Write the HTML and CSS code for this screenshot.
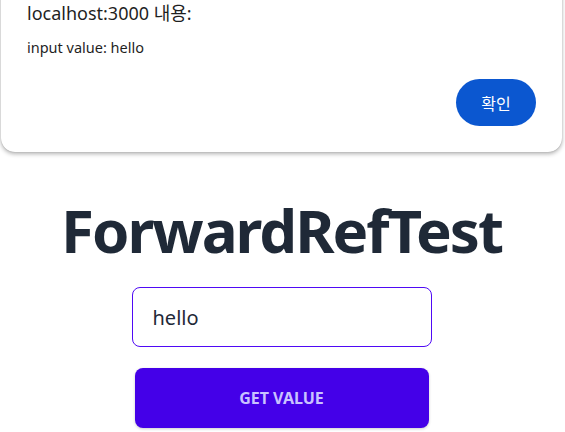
FILE: index.html
```html
<!DOCTYPE html>
<html lang="ko">
<head>
<meta charset="utf-8">
<link rel="stylesheet" href="styles.css">
</head>
<body>
<main class="page">
  <h1 class="title">ForwardRefTest</h1>
  <input class="field" type="text" value="hello">
  <button class="get-btn">GET VALUE</button>
</main>
<div class="dialog">
  <div class="dialog-title">localhost:3000 내용:</div>
  <div class="dialog-msg">input value: hello</div>
  <div class="dialog-actions">
    <button class="ok-btn">확인</button>
  </div>
</div>
</body>
</html>
```
FILE: styles.css
```css
* { box-sizing: border-box; }
html, body { margin: 0; padding: 0; background: #fff; }
body {
  width: 565px;
  height: 432px;
  overflow: hidden;
  position: relative;
  font-family: "Noto Sans", "Noto Sans CJK KR", sans-serif;
}
.page {
  display: flex;
  flex-direction: column;
  align-items: center;
  padding-top: 192px;
  padding-right: 2px;
}
.title {
  margin: 0;
  font-size: 60px;
  font-weight: 700;
  line-height: 76px;
  color: #1f2937;
  letter-spacing: -2px;
}
.field {
  margin-top: 19px;
  width: 300px;
  height: 60px;
  border: 1px solid #4f0af5;
  border-radius: 8px;
  padding: 0 20px;
  font-family: "Noto Sans", sans-serif;
  font-size: 20px;
  color: #1f2937;
  outline: none;
}
.get-btn {
  margin-top: 21px;
  width: 294px;
  height: 60px;
  border: none;
  border-radius: 8px;
  background: #4400e8;
  color: #c9c2ff;
  font-family: "Noto Sans", sans-serif;
  font-weight: 700;
  font-size: 16px;
  box-shadow: 0 1px 3px rgba(0,0,0,0.2);
}
.dialog {
  position: absolute;
  left: 1px;
  top: -20px;
  width: 561px;
  height: 172px;
  background: #fff;
  border-radius: 14px;
  box-shadow: 0 2px 4px rgba(0,0,0,0.3), 0 0 1px rgba(0,0,0,0.3);
  padding: 21px 26px 0 26px;
  display: flex;
  flex-direction: column;
}
.dialog-title {
  font-size: 18px;
  line-height: 24px;
  color: #1f1f1f;
  font-family: "Noto Sans", "Noto Sans CJK KR", sans-serif;
}
.dialog-msg {
  margin-top: 12px;
  font-size: 14.5px;
  line-height: 20px;
  color: #1f1f1f;
}
.dialog-actions {
  display: flex;
  justify-content: flex-end;
  margin-top: 22px;
}
.ok-btn {
  width: 80px;
  height: 47px;
  border: none;
  border-radius: 24px;
  background: #0b57d0;
  color: #fff;
  font-size: 16px;
  font-family: "Noto Sans CJK KR", sans-serif;
}
```
